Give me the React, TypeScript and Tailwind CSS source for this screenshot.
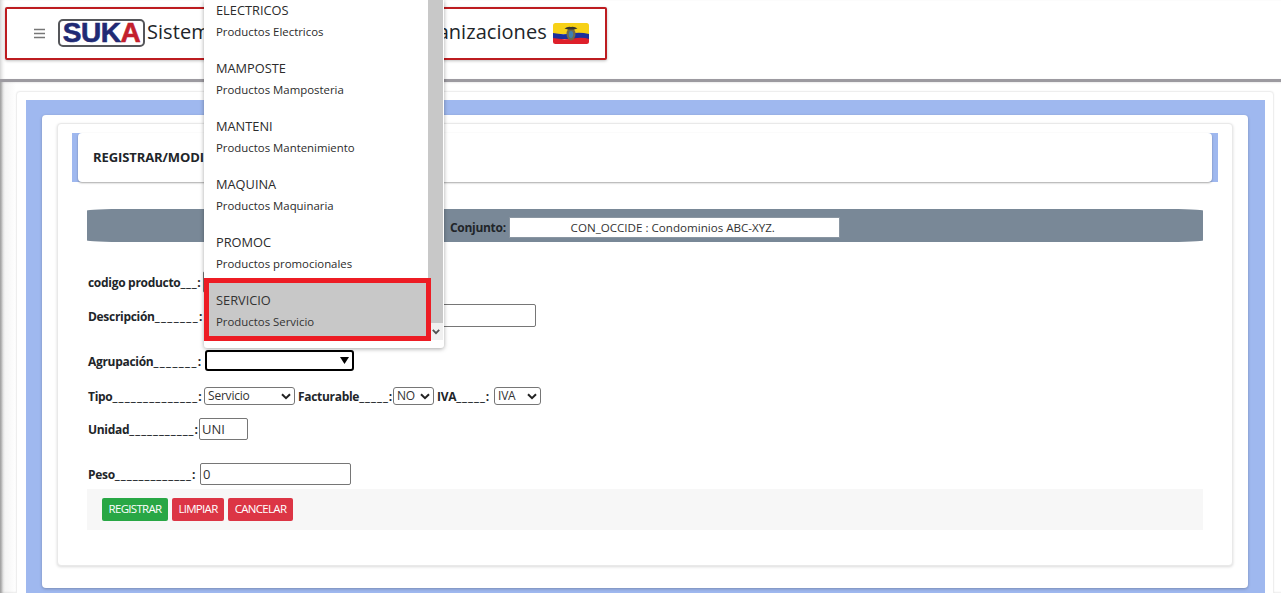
const font = { fontFamily: '"Open Sans", "Noto Sans", sans-serif' };

function Logo() {
  return (
    <div className="flex h-[28px] w-[87px] items-center justify-center rounded-[5px] border-2 border-[#55565a] bg-white font-['Liberation_Sans',sans-serif] text-[28px] leading-none font-bold tracking-[-0.5px] [-webkit-text-stroke:0.6px_currentColor]">
      <span className="text-[#1f2a74]">SUK</span>
      <span className="text-[#c3202c]">A</span>
    </div>
  );
}

function Flag() {
  return (
    <svg width="36" height="21" viewBox="0 0 36 21" className="shrink-0">
      <defs>
        <clipPath id="flagclip">
          <rect width="36" height="21" rx="2.5" />
        </clipPath>
      </defs>
      <g clipPath="url(#flagclip)">
        <rect width="36" height="11" fill="#f7d117" />
        <path d="M0 10 Q9 12 18 10.5 T36 11 V16 H0Z" fill="#1c2f9c" />
        <path d="M0 15 Q10 17 20 15.5 T36 16 V21 H0Z" fill="#de1f2a" />
        <ellipse cx="18" cy="11" rx="4.5" ry="6.5" fill="#6f6a4c" />
        <ellipse cx="18" cy="11.5" rx="2.2" ry="3.4" fill="#3f7fb0" />
        <path d="M11.5 5.5 Q15 3 18 4 Q21 3 24.5 5.5 L21 6.5 H15Z" fill="#38362e" />
      </g>
    </svg>
  );
}

function Row({ name, desc, active }: { name: string; desc: string; active?: boolean }) {
  return (
    <div className={active ? '-mt-[5px] flex h-[63px] w-[227px] flex-col border-[5px] border-[#ed1c24] bg-[#c8c8c8] pl-[7px] text-[#333]' : 'flex h-[58px] flex-col pl-[12px] text-[#2b2b2b]'}>
      <div className="mt-[6px] text-[12.8px] leading-[22px]">{name}</div>
      <div className="text-[11.4px] leading-[22px]">{desc}</div>
    </div>
  );
}

const inputBase = 'h-full rounded-[2px] border border-[#767676] bg-white px-[2px] text-[13px] text-[#333] outline-none';
const labelBase = 'shrink-0 whitespace-nowrap text-[12px] font-bold tracking-[-0.3px] text-[#212529]';

function Label({ name, n, className, sp = 'tracking-[1px]' }: { name: string; n: number; className: string; sp?: string }) {
  return (
    <span className={`${labelBase} pt-[2px] ${className}`}>
      {name}
      <span className={sp}>{'_'.repeat(n)}</span>:
    </span>
  );
}

function Native({ value, className, options }: { value: string; className: string; options?: string[] }) {
  return (
    <div className={`relative h-[18px] shrink-0 ${className}`}>
      <select defaultValue={value} className="block h-[18px] w-full appearance-none rounded-[3px] border border-[#767676] bg-white pl-[3px] text-[12px] leading-[16px] tracking-[-0.2px] text-[#333]" style={font}>
        {(options ?? [value]).map((o) => (
          <option key={o}>{o}</option>
        ))}
      </select>
      <svg width="10" height="7" viewBox="0 0 10 7" className="pointer-events-none absolute top-[6px] right-[4px]">
        <path d="M1 1.2L5 5.2L9 1.2" fill="none" stroke="#222" strokeWidth="2" />
      </svg>
    </div>
  );
}

const btn = 'h-[23px] rounded-[2px] pb-[1px] text-[11.5px] tracking-[-0.7px] text-white';

export default function App() {
  return (
    <div className="relative h-[593px] w-[1281px] overflow-hidden bg-white" style={font}>
      <header className="h-[79px] bg-white pt-[7px] pl-[5px] shadow-[inset_4px_0_4px_-3px_#c4c4c4]">
        <div className="flex h-[53px] w-[602px] items-center rounded-[2px] border-2 border-[#bd1c20] bg-white shadow-[0_1px_3px_rgba(0,0,0,0.25)]">
          <svg width="11" height="11" viewBox="0 0 11 11" className="ml-[27px] shrink-0">
            <path d="M0 1.5H11M0 5.5H11M0 9.5H11" stroke="#777" strokeWidth="1.4" />
          </svg>
          <div className="ml-[13px] -mt-[2px]">
            <Logo />
          </div>
          <div className="ml-[2px] -mt-[4px] w-[406px] whitespace-nowrap text-[20px] tracking-[0.05px] text-[#212529]">Sistema de Información de Organizaciones</div>
          <Flag />
        </div>
      </header>
      <div className="h-[3px] bg-[#9c9aa0]" />

      <main className="h-[511px] bg-linear-to-r from-[#f0f0f0] to-white to-[16px] pt-[9px] pr-[7px] pl-[16px] shadow-[inset_3px_0_3px_-1px_#999]">
        <div className="h-[600px] rounded-[4px] border border-[#eeeeee] bg-white pt-[8px] pr-[8px] pl-[9px] shadow-[0_0_2px_rgba(0,0,0,0.05)]">
          <div className="h-[600px] bg-[#9fb8ef] pt-[15px] pr-[17px] pl-[16px]">
            <div className="h-[473px] rounded-[4px] bg-white pt-[8px] pr-[15px] pl-[15px] shadow-[0_1px_3px_rgba(0,0,0,0.25)]">
              <div className="flex h-[443px] flex-col rounded-[4px] border border-[#e9e9e9] bg-white pt-[9px] pr-[14px] pl-[14px] shadow-[0_1px_3px_rgba(0,0,0,0.15)]">
                <div className="h-[49px] bg-[#9fb8ef] px-[6px]">
                  <div className="flex h-[49px] items-center rounded-[4px] bg-white pl-[15px] shadow-[0_1px_2px_rgba(0,0,0,0.35)]">
                    <span className="whitespace-nowrap text-[13px] font-bold tracking-[-0.1px] text-[#212529]">REGISTRAR/MODIFICAR PRODUCTO</span>
                  </div>
                </div>

                <div className="mt-[27px] ml-[15px] mr-[15px] flex h-[33px] w-[1116px] items-center rounded-[40px/1.5px] bg-[#798897] pt-[4px] pl-[363px]">
                  <span className={`${labelBase} mr-[3px] pt-[1px]`}>Conjunto:</span>
                  <div className="flex h-[21px] w-[331px] items-center justify-center border border-[#8a96a2] bg-white pt-[1px] pr-[3px] text-[11.6px] text-[#333]">CON_OCCIDE : Condominios ABC-XYZ.</div>
                </div>

                <div className="ml-[15px] mt-[29px] flex h-[22px] items-center">
                  <Label name="codigo producto" n={3} className="ml-[1px] w-[115px]" sp="tracking-[0.7px]" />
                  <input readOnly className={`${inputBase} w-[120px]`} />
                </div>
                <div className="ml-[15px] mt-[11px] flex h-[23px] items-center">
                  <Label name="Descripción" n={7} className="ml-[1px] w-[116px]" sp="tracking-[1.4px]" />
                  <input readOnly className={`${inputBase} w-[332px]`} />
                </div>
                <div className="ml-[15px] mt-[23px] flex h-[21px] items-center">
                  <Label name="Agrupación" n={7} className="ml-[1px] w-[117px]" sp="tracking-[1.4px]" />
                  <div className="flex h-[21px] w-[149px] items-center justify-end rounded-[3px] border-2 border-black bg-white pr-[3px]">
                    <svg width="9" height="7" viewBox="0 0 9 7">
                      <path d="M0 0H9L4.5 7Z" fill="#000" />
                    </svg>
                  </div>
                </div>
                <div className="ml-[15px] mt-[16px] flex h-[18px] items-center">
                  <Label name="Tipo" n={14} className="ml-[1px] w-[116px]" sp="tracking-[1.2px]" />
                  <Native value="Servicio" className="w-[91px]" options={['Servicio', 'Producto']} />
                  <Label name="Facturable" n={5} className="ml-[3px] w-[95px]" />
                  <Native value="NO" className="w-[41px]" options={['NO', 'SI']} />
                  <Label name="IVA" n={5} className="ml-[3px] w-[57px]" />
                  <Native value="IVA" className="w-[47px]" />
                </div>
                <div className="ml-[15px] mt-[13px] flex h-[22px] items-center">
                  <Label name="Unidad" n={11} className="ml-[1px] w-[111px]" />
                  <input readOnly value="UNI" className={`${inputBase} w-[49px]`} />
                </div>
                <div className="ml-[15px] mt-[23px] flex h-[22px] items-center">
                  <Label name="Peso" n={13} className="ml-[1px] w-[112px]" />
                  <input readOnly value="0" className={`${inputBase} w-[151px]`} />
                </div>
                <div className="ml-[15px] mt-[4px] flex h-[41px] w-[1116px] items-center gap-[4px] bg-[#f7f7f7] pl-[15px]">
                  <button className={`${btn} w-[66px] bg-[#28a745]`}>REGISTRAR</button>
                  <button className={`${btn} w-[52px] bg-[#dc3545]`}>LIMPIAR</button>
                  <button className={`${btn} w-[65px] bg-[#dc3545]`}>CANCELAR</button>
                </div>
              </div>
            </div>
          </div>
        </div>
      </main>

      <div className="absolute top-0 left-[204px] h-[348px] w-[240px] overflow-hidden rounded-b-[3px] bg-white shadow-[0_1px_4px_rgba(0,0,0,0.35)]">
        <div className="absolute top-0 right-[1px] h-[323px] w-[15px] bg-[#c8c8c8]" />
        <div className="absolute top-[323px] right-[1px] flex h-[17px] w-[15px] items-center justify-center bg-[#f0f0f0]">
          <svg width="8" height="6" viewBox="0 0 8 6">
            <path d="M0.8 0.8L4 4.2L7.2 0.8" fill="none" stroke="#505050" strokeWidth="1.8" />
          </svg>
        </div>
        <div className="relative -mt-[7px] flex flex-col">
          <Row name="ELECTRICOS" desc="Productos Electricos" />
          <Row name="MAMPOSTE" desc="Productos Mamposteria" />
          <Row name="MANTENI" desc="Productos Mantenimiento" />
          <Row name="MAQUINA" desc="Productos Maquinaria" />
          <Row name="PROMOC" desc="Productos promocionales" />
          <Row name="SERVICIO" desc="Productos Servicio" active />
        </div>
      </div>
    </div>
  );
}
